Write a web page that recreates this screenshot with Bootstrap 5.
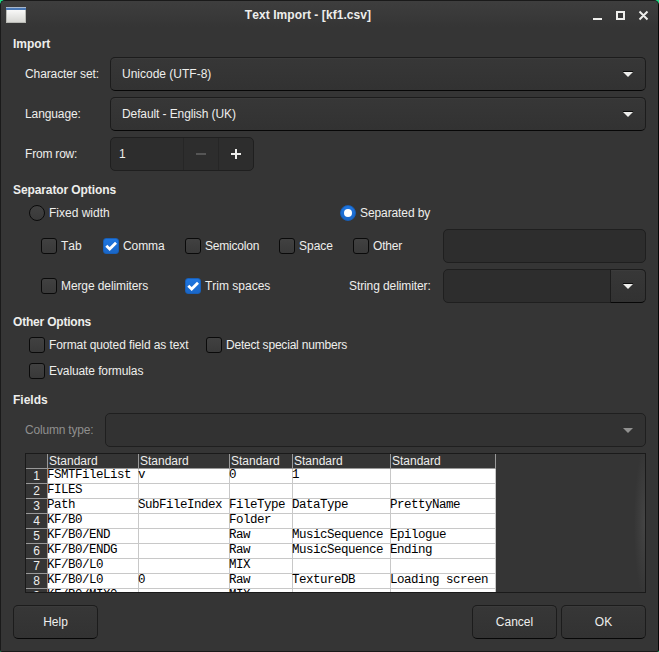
<!DOCTYPE html>
<html lang="en" data-bs-theme="dark">
<head>
<meta charset="utf-8">
<title>Text Import - [kf1.csv]</title>
<link href="https://cdn.jsdelivr.net/npm/bootstrap@5.3.0/dist/css/bootstrap.min.css" rel="stylesheet">
<style>
html, body { height: 652px; overflow: hidden; }
body { margin: 0; background: #22df88; font-family: "Liberation Sans", Arial, sans-serif; font-size: 12px; line-height: 16px; font-kerning: none; color: #eeeeec; }
.dialog-window { width: 659px; height: 652px; background: #353535; border: 1px solid #1a1a1a; border-right: 1px solid #050505; border-radius: 5px 5px 2px 2px; overflow: hidden; }
.titlebar { height: 28px; background: linear-gradient(#3e3e3e, #353535 26px); font-weight: bold; }
.titlebar .side { width: 57px; }
.titlebar .side.right { width: 100px; padding-right: 4px; }
.title-text { letter-spacing: .07px; }
.dialog-main { padding: 0 12px; }
.heading { font-weight: bold; height: 16px; }
.import-head { margin-top: 7px; margin-bottom: 5px; }
.labelled { display: grid; grid-template-columns: 85px 1fr; align-items: center; height: 34px; padding-left: 12px; margin-bottom: 6px; }
.combo, .field, .push { height: 34px; border: 1px solid #1c1c1c; border-radius: 5px; }
.combo, .push { background: linear-gradient(#373737, #323232); border-bottom-color: #070707; box-shadow: inset 0 1px #3b3b3b; }
.combo { padding: 0 12px 0 11px; }
.combo.off { background: #323232; border-color: #1f1f1f; box-shadow: none; }
.field { background: #2d2d2d; border-color: #1f1f1f; }
.spin { width: 144px; }
.spin > div { height: 32px; }
.spin .step { width: 35px; border-left: 1px solid #262626; }
.push { width: 85px; color: inherit; }
.opt { display: flex; align-items: center; gap: 4px; height: 16px; white-space: nowrap; }
.box { width: 16px; height: 16px; flex: none; border: 1px solid #0a0a0a; border-radius: 3px; background: linear-gradient(#414141, #393939); }
.box.on { border-color: #185fb8; background: linear-gradient(#1f76e0, #1a67c8); }
.box svg { display: block; margin: -1px; }
.box.round { border-radius: 50%; }
.sep-head { margin-top: 11px; }
.mode-row { padding-left: 16px; margin-top: 7px; margin-bottom: 8px; }
.mode-row .opt:first-child { width: 311px; }
.sep-grid { display: grid; grid-template-columns: 62px 82px 94px 74px 90px 203px; align-items: center; height: 34px; padding-left: 28px; }
.delim-grid { display: grid; grid-template-columns: 144px 164px 94px 203px; align-items: center; height: 34px; margin-top: 6px; padding-left: 28px; }
.drop { width: 36px; margin: -1px; border-radius: 0 5px 5px 0; }
.other-head { margin-top: 11px; }
.other-row { padding-left: 16px; margin-top: 7px; }
.other-row .opt:first-child { width: 177px; }
.other-row.second { margin-top: 10px; }
.fields-head { margin-top: 13px; margin-bottom: 5px; }
.type-row { grid-template-columns: 80px 1fr; }
.preview { height: 140px; width: 621px; margin: 6px 0 0 12px; border: 1px solid #1a1a1a; overflow: hidden; background: #353535 radial-gradient(ellipse 11px 75px at 100% 50%, #454545, #353535) no-repeat; }
.preview .cells { display: grid; grid-template-columns: 22px 91px 91px 63px 98px 105px; width: 470px; }
.preview .cells > div { height: 15px; line-height: 15px; white-space: pre; border-right: 1px solid #c8c8c8; border-bottom: 1px solid #c8c8c8; }
.preview .cells > .head { border-color: #999; line-height: 14px; padding-left: 1px; }
.preview .cells > .num { border-color: #999; text-align: center; line-height: 14px; }
.preview .cells > .val { background: #fff; color: #000; font-family: "Liberation Mono", monospace; font-size: 12.5px; letter-spacing: -.5px; line-height: 12px; text-indent: -1px; }
.dim { color: #8f8f8e; }
.t1 { letter-spacing: -.1px; }
.t2 { letter-spacing: -.2px; }
.actions { gap: 4px; margin-top: 12px; }
</style>
<script src="https://cdn.jsdelivr.net/npm/bootstrap@5.3.0/dist/js/bootstrap.bundle.min.js"></script>
</head>
<body>
<div class="dialog-window d-flex flex-column">
  <div class="titlebar d-flex align-items-center justify-content-between">
    <div class="side">
      <svg class="d-block" width="30" height="18" viewBox="0 0 30 18">
        <defs><linearGradient id="g" x1="0" y1="0" x2="0" y2="1"><stop stop-color="#fff"/><stop offset="1" stop-color="#d6d6d2"/></linearGradient></defs>
        <rect x="5.5" y="1.5" width="19" height="15" fill="url(#g)" stroke="#b9bab5"/>
        <rect x="5" y="1" width="20" height="3" fill="#4a78b5"/><rect x="5" y="1" width="20" height="1" fill="#a9b8cc"/>
      </svg>
    </div>
    <div class="title-text">Text Import - [kf1.csv]</div>
    <div class="side right d-flex justify-content-end">
      <svg width="66" height="16" viewBox="0 0 66 16" fill="none" stroke="#eeeeec" stroke-width="2">
        <path d="M5 12h9M29 5h7v7h-7zM51.5 4.5l8 8M59.5 4.5l-8 8"/>
      </svg>
    </div>
  </div>
  <div class="dialog-main">
    <div class="heading import-head">Import</div>
    <div class="labelled"><span class="t1">Character set:</span><div class="combo d-flex align-items-center justify-content-between"><span>Unicode (UTF-8)</span><svg width="10" height="6"><path d="M0 .5h10" stroke="#0b0b0b"/><path d="M0 1h10l-5 5z" fill="#eeeeec"/></svg></div></div>
    <div class="labelled"><span class="t1">Language:</span><div class="combo d-flex align-items-center justify-content-between"><span class="t1">Default - English (UK)</span><svg width="10" height="6"><path d="M0 .5h10" stroke="#0b0b0b"/><path d="M0 1h10l-5 5z" fill="#eeeeec"/></svg></div></div>
    <div class="labelled mb-0"><span class="t2">From row:</span>
      <div class="field spin d-flex align-items-center"><div class="flex-grow-1 d-flex align-items-center ps-2">1</div>
        <div class="step d-flex align-items-center justify-content-center"><svg width="10" height="10"><path d="M0 5h10" stroke="#555" stroke-width="2"/></svg></div>
        <div class="step d-flex align-items-center justify-content-center"><svg width="10" height="10"><path d="M0 5h10M5 0v10" stroke="#eeeeec" stroke-width="2"/></svg></div>
      </div>
    </div>

    <div class="heading sep-head t1">Separator Options</div>
    <div class="d-flex mode-row">
      <div class="opt"><span class="box round"></span><span>Fixed width</span></div>
      <div class="opt"><span class="box round on"><svg width="16" height="16"><circle cx="8" cy="8" r="4" fill="#fff"/></svg></span><span class="t1">Separated by</span></div>
    </div>
    <div class="sep-grid">
      <div class="opt"><span class="box"></span><span>Tab</span></div>
      <div class="opt"><span class="box on"><svg width="16" height="16"><path d="M3.3 7.7L6.7 11 13 4.7" fill="none" stroke="#fff" stroke-width="2.8"/></svg></span><span class="t1">Comma</span></div>
      <div class="opt"><span class="box"></span><span class="t2">Semicolon</span></div>
      <div class="opt"><span class="box"></span><span>Space</span></div>
      <div class="opt"><span class="box"></span><span class="t2">Other</span></div>
      <div class="field"></div>
    </div>
    <div class="delim-grid">
      <div class="opt"><span class="box"></span><span class="t1">Merge delimiters</span></div>
      <div class="opt"><span class="box on"><svg width="16" height="16"><path d="M3.3 7.7L6.7 11 13 4.7" fill="none" stroke="#fff" stroke-width="2.8"/></svg></span><span>Trim spaces</span></div>
      <span class="t1">String delimiter:</span>
      <div class="field d-flex justify-content-end"><div class="combo drop d-flex align-items-center justify-content-center p-0"><svg width="10" height="6"><path d="M0 .5h10" stroke="#0b0b0b"/><path d="M0 1h10l-5 5z" fill="#eeeeec"/></svg></div></div>
    </div>

    <div class="heading other-head t2">Other Options</div>
    <div class="d-flex other-row">
      <div class="opt"><span class="box"></span><span class="t1">Format quoted field as text</span></div>
      <div class="opt"><span class="box"></span><span class="t2">Detect special numbers</span></div>
    </div>
    <div class="other-row second"><div class="opt"><span class="box"></span><span class="t1">Evaluate formulas</span></div></div>

    <div class="heading fields-head">Fields</div>
    <div class="labelled type-row mb-0"><span class="dim t2">Column type:</span><div class="combo off d-flex align-items-center justify-content-end"><svg width="10" height="6"><path d="M0 1h10l-5 5z" fill="#919190"/></svg></div></div>

    <div class="preview"><div class="cells">
      <div class="head"></div><div class="head">Standard</div><div class="head">Standard</div><div class="head">Standard</div><div class="head">Standard</div><div class="head">Standard</div>
      <div class="num">1</div><div class="val">FSMTFileList</div><div class="val">v</div><div class="val">0</div><div class="val">1</div><div class="val"></div>
      <div class="num">2</div><div class="val">FILES</div><div class="val"></div><div class="val"></div><div class="val"></div><div class="val"></div>
      <div class="num">3</div><div class="val">Path</div><div class="val">SubFileIndex</div><div class="val">FileType</div><div class="val">DataType</div><div class="val">PrettyName</div>
      <div class="num">4</div><div class="val">KF/B0</div><div class="val"></div><div class="val">Folder</div><div class="val"></div><div class="val"></div>
      <div class="num">5</div><div class="val">KF/B0/END</div><div class="val"></div><div class="val">Raw</div><div class="val">MusicSequence</div><div class="val">Epilogue</div>
      <div class="num">6</div><div class="val">KF/B0/ENDG</div><div class="val"></div><div class="val">Raw</div><div class="val">MusicSequence</div><div class="val">Ending</div>
      <div class="num">7</div><div class="val">KF/B0/L0</div><div class="val"></div><div class="val">MIX</div><div class="val"></div><div class="val"></div>
      <div class="num">8</div><div class="val">KF/B0/L0</div><div class="val">0</div><div class="val">Raw</div><div class="val">TextureDB</div><div class="val">Loading screen</div>
      <div class="num">9</div><div class="val">KF/B0/MIX0</div><div class="val"></div><div class="val">MIX</div><div class="val"></div><div class="val"></div>
    </div></div>

    <div class="d-flex actions">
      <button class="push me-auto">Help</button><button class="push">Cancel</button><button class="push">OK</button>
    </div>
  </div>
</div>
</body>
</html>
